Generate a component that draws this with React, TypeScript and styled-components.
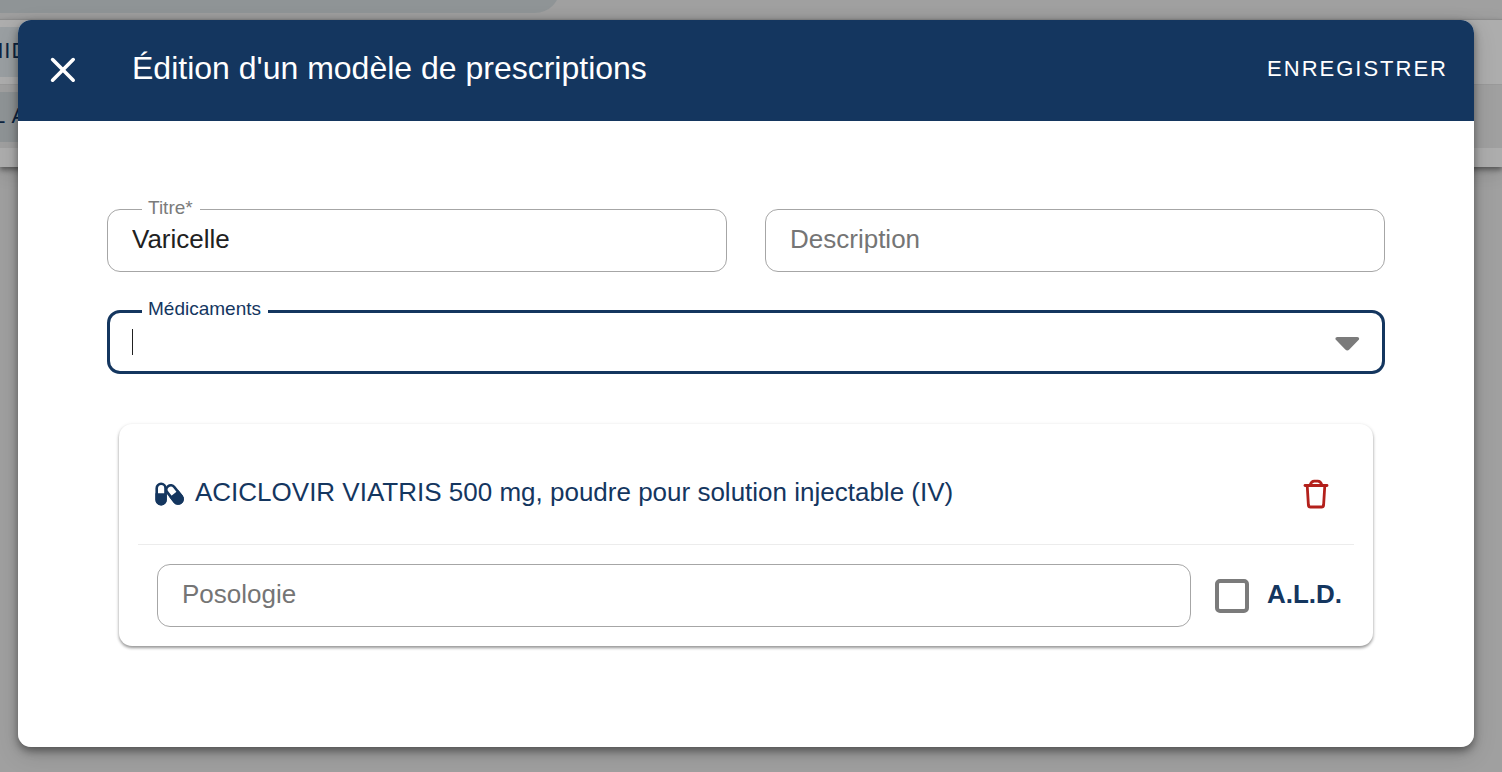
import React, { useState } from 'react';
import styled, { createGlobalStyle } from 'styled-components';

const NAVY = '#14365f';

const GlobalStyle = createGlobalStyle`
  *, *::before, *::after { box-sizing: border-box; }
  body {
    margin: 0;
    background: #a0a0a0;
    color: #212121;
    font-family: "Liberation Sans", Helvetica, Arial, sans-serif;
    font-size: 26px;
  }
  button, input { font: inherit; letter-spacing: inherit; color: inherit; }
`;

const Page = styled.div`
  position: relative;
  min-height: 100vh;
  overflow: hidden;
`;

const Backdrop = styled.div`
  position: absolute;
  inset: 0;
`;

const TopBar = styled.div`
  height: 19px;
  overflow: hidden;
  display: flex;
  align-items: flex-end;
`;

const Pill = styled.div`
  width: 560px;
  height: 50px;
  margin-bottom: 6px;
  border-radius: 0 0 25px 0;
  background: #8f9496;
`;

const Sheet = styled.div`
  padding-bottom: 19px;
  background: #adadad;
  box-shadow: 0 3px 5px rgba(0, 0, 0, 0.4), 0 6px 18px rgba(0, 0, 0, 0.12);
`;

const SheetRow = styled.div<{ $shaded?: boolean }>`
  display: flex;
  align-items: center;
  height: ${(p) => (p.$shaded ? 64 : 65)}px;
  border-top: 1px solid ${(p) => (p.$shaded ? '#9a9a9a' : '#8b8b8b')};
  background: ${(p) => (p.$shaded ? '#a0a0a0' : '#adadad')};
`;

const Chip = styled.div<{ $shaded?: boolean }>`
  display: flex;
  justify-content: flex-end;
  align-items: center;
  width: 44px;
  height: 50px;
  padding-bottom: 2px;
  background: ${(p) => (p.$shaded ? '#8f9496' : '#9a9fa2')};
  color: #0d2440;
  font-size: 22px;
  letter-spacing: 1px;
  white-space: nowrap;
`;

const Overlay = styled.div`
  position: relative;
  padding: 20px 28px 25px 18px;
`;

const Dialog = styled.form`
  overflow: hidden;
  border-radius: 13px;
  background: #fff;
`;

const DialogShadow = styled.div`
  border-radius: 13px;
  box-shadow: 0 4px 8px rgba(0, 0, 0, 0.42), 0 8px 24px rgba(0, 0, 0, 0.14);
`;

const Header = styled.header`
  display: flex;
  align-items: center;
  height: 101px;
  padding: 0 26px 2px 32px;
  background: ${NAVY};
  color: #fff;
`;

const PlainButton = styled.button`
  display: flex;
  padding: 0;
  border: 0;
  background: none;
  cursor: pointer;
`;

const Title = styled.h1`
  flex: 1;
  margin: 0 0 4px 56px;
  font-size: 32px;
  line-height: 40px;
  font-weight: 400;
`;

const SaveButton = styled(PlainButton)`
  margin-bottom: 2px;
  font-size: 22px;
  letter-spacing: 2px;
  text-transform: uppercase;
`;

const Body = styled.div`
  padding: 88px 89px 101px;
`;

const FieldRow = styled.div`
  display: grid;
  grid-template-columns: 1fr 1fr;
  gap: 38px;
  margin-bottom: 38px;
`;

const Field = styled.div<{ $active?: boolean }>`
  position: relative;
  display: flex;
  align-items: center;
  flex: 1;
  height: ${(p) => (p.$active ? 64 : 63)}px;
  padding: 0 ${(p) => (p.$active ? 22 : 24)}px;
  border: ${(p) => (p.$active ? `3px solid ${NAVY}` : '1px solid #a6a6a6')};
  border-radius: 13px;
  color: #212121;
`;

const FloatingLabel = styled.label<{ $active?: boolean }>`
  position: absolute;
  top: ${(p) => (p.$active ? -15 : -13)}px;
  left: ${(p) => (p.$active ? 32 : 34)}px;
  padding: 0 7px 0 6px;
  background: #fff;
  color: ${(p) => (p.$active ? NAVY : '#7b7b7b')};
  font-size: 19px;
  line-height: 22px;
`;

const TextInput = styled.input`
  flex: 1;
  min-width: 0;
  height: 32px;
  padding: 0 0 2px;
  border: 0;
  outline: 0;
  background: none;
  &::placeholder { color: #757575; opacity: 1; }
`;

const Caret = styled.span`
  width: 1px;
  height: 26px;
  background: #212121;
`;

const Card = styled.section`
  margin: 50px 12px 0;
  padding: 0 19px 19px;
  border-radius: 13px;
  box-shadow: 0 2px 3px rgba(0, 0, 0, 0.36), 0 1px 4px rgba(0, 0, 0, 0.1);
`;

const CardHeader = styled.div`
  display: flex;
  align-items: center;
  height: 121px;
  padding: 20px 25px 0 17px;
  border-bottom: 1px solid #ececec;
  color: ${NAVY};
`;

const DrugName = styled.h2`
  flex: 1;
  margin: 0 0 4px 10px;
  font-size: 26px;
  line-height: 32px;
  font-weight: 400;
`;

const CardRow = styled.div`
  display: flex;
  align-items: center;
  padding: 19px 12px 0 19px;
`;

const CheckLabel = styled.label`
  display: flex;
  align-items: center;
  gap: 18px;
  margin-left: 24px;
  color: ${NAVY};
  font-weight: 700;
`;

const Checkbox = styled.input`
  appearance: none;
  width: 34px;
  height: 34px;
  margin: 0;
  border: 4px solid #7b7b7b;
  border-radius: 5px;
  &:checked { background: ${NAVY}; border-color: ${NAVY}; }
`;

const CheckText = styled.span`
  padding-bottom: 2px;
`;

const CloseIcon = () => (
  <svg width="26" height="26" viewBox="0 0 26 26" fill="none" stroke="#fff" strokeWidth="3.6" strokeLinecap="round" aria-hidden="true">
    <path d="M2.6 2.6 23.2 23.2M23.2 2.6 2.6 23.2" />
  </svg>
);

const ArrowIcon = () => (
  <svg width="25" height="18" viewBox="0 0 25 18" aria-hidden="true">
    <path d="M2.4 4H22.2C24.1 4 24.8 5.9 23.5 7.1L14.3 16.6Q12.3 18.6 10.3 16.6L1.1 7.1C-.2 5.9.5 4 2.4 4Z" fill="#7b7b7b" />
  </svg>
);

const PillsIcon = () => (
  <svg width="30" height="24" viewBox="0 0 30 24" fill="none" aria-hidden="true">
    <g stroke={NAVY} strokeWidth="2.6">
      <rect x="1.7" y="1.8" width="8.8" height="20.4" rx="4.4" />
      <path d="M1.7 12.6H10.5V17.8A4.4 4.4 0 0 1 1.7 17.8Z" fill={NAVY} />
      <g transform="rotate(-38 19.5 12.4)">
        <rect x="15.1" y="2" width="8.8" height="20.8" rx="4.4" />
        <path d="M15.1 12.8H23.9V18.4A4.4 4.4 0 0 1 15.1 18.4Z" fill={NAVY} />
      </g>
    </g>
  </svg>
);

const TrashIcon = () => (
  <svg width="26" height="30" viewBox="0 0 26 30" fill="none" stroke="#b3201b" strokeWidth="2.8" strokeLinecap="round" strokeLinejoin="round" aria-hidden="true">
    <path d="M2 6.5H24" />
    <path d="M7.2 6C8 3.2 9.5 2.2 11.2 2.2H14.8C16.5 2.2 18 3.2 18.8 6" />
    <path d="M4.2 6.5 5.4 26Q5.6 28 7.4 28H18.6Q20.4 28 20.6 26L21.8 6.5" />
  </svg>
);

export default function App() {
  const [title, setTitle] = useState('Varicelle');
  return (
    <>
      <GlobalStyle />
      <Page>
        <Backdrop aria-hidden="true">
          <TopBar>
            <Pill />
          </TopBar>
          <Sheet>
            <SheetRow>
              <Chip>AMIDE</Chip>
            </SheetRow>
            <SheetRow $shaded>
              <Chip $shaded>OL AC</Chip>
            </SheetRow>
          </Sheet>
        </Backdrop>
        <Overlay>
          <DialogShadow>
            <Dialog role="dialog" aria-labelledby="dialog-title" onSubmit={(e) => e.preventDefault()}>
              <Header>
                <PlainButton type="button" aria-label="Fermer">
                  <CloseIcon />
                </PlainButton>
                <Title id="dialog-title">Édition d'un modèle de prescriptions</Title>
                <SaveButton type="submit">Enregistrer</SaveButton>
              </Header>
              <Body>
                <FieldRow>
                  <Field>
                    <FloatingLabel htmlFor="titre">Titre*</FloatingLabel>
                    <TextInput id="titre" value={title} onChange={(e) => setTitle(e.target.value)} />
                  </Field>
                  <Field>
                    <TextInput aria-label="Description" placeholder="Description" />
                  </Field>
                </FieldRow>
                <Field $active>
                  <FloatingLabel $active htmlFor="medicaments">Médicaments</FloatingLabel>
                  <Caret />
                  <TextInput id="medicaments" role="combobox" aria-expanded="false" />
                  <PlainButton type="button" aria-label="Ouvrir la liste">
                    <ArrowIcon />
                  </PlainButton>
                </Field>
                <Card>
                  <CardHeader>
                    <PillsIcon />
                    <DrugName>ACICLOVIR VIATRIS 500 mg, poudre pour solution injectable (IV)</DrugName>
                    <PlainButton type="button" aria-label="Supprimer">
                      <TrashIcon />
                    </PlainButton>
                  </CardHeader>
                  <CardRow>
                    <Field>
                      <TextInput aria-label="Posologie" placeholder="Posologie" />
                    </Field>
                    <CheckLabel>
                      <Checkbox type="checkbox" />
                      <CheckText>A.L.D.</CheckText>
                    </CheckLabel>
                  </CardRow>
                </Card>
              </Body>
            </Dialog>
          </DialogShadow>
        </Overlay>
      </Page>
    </>
  );
}
